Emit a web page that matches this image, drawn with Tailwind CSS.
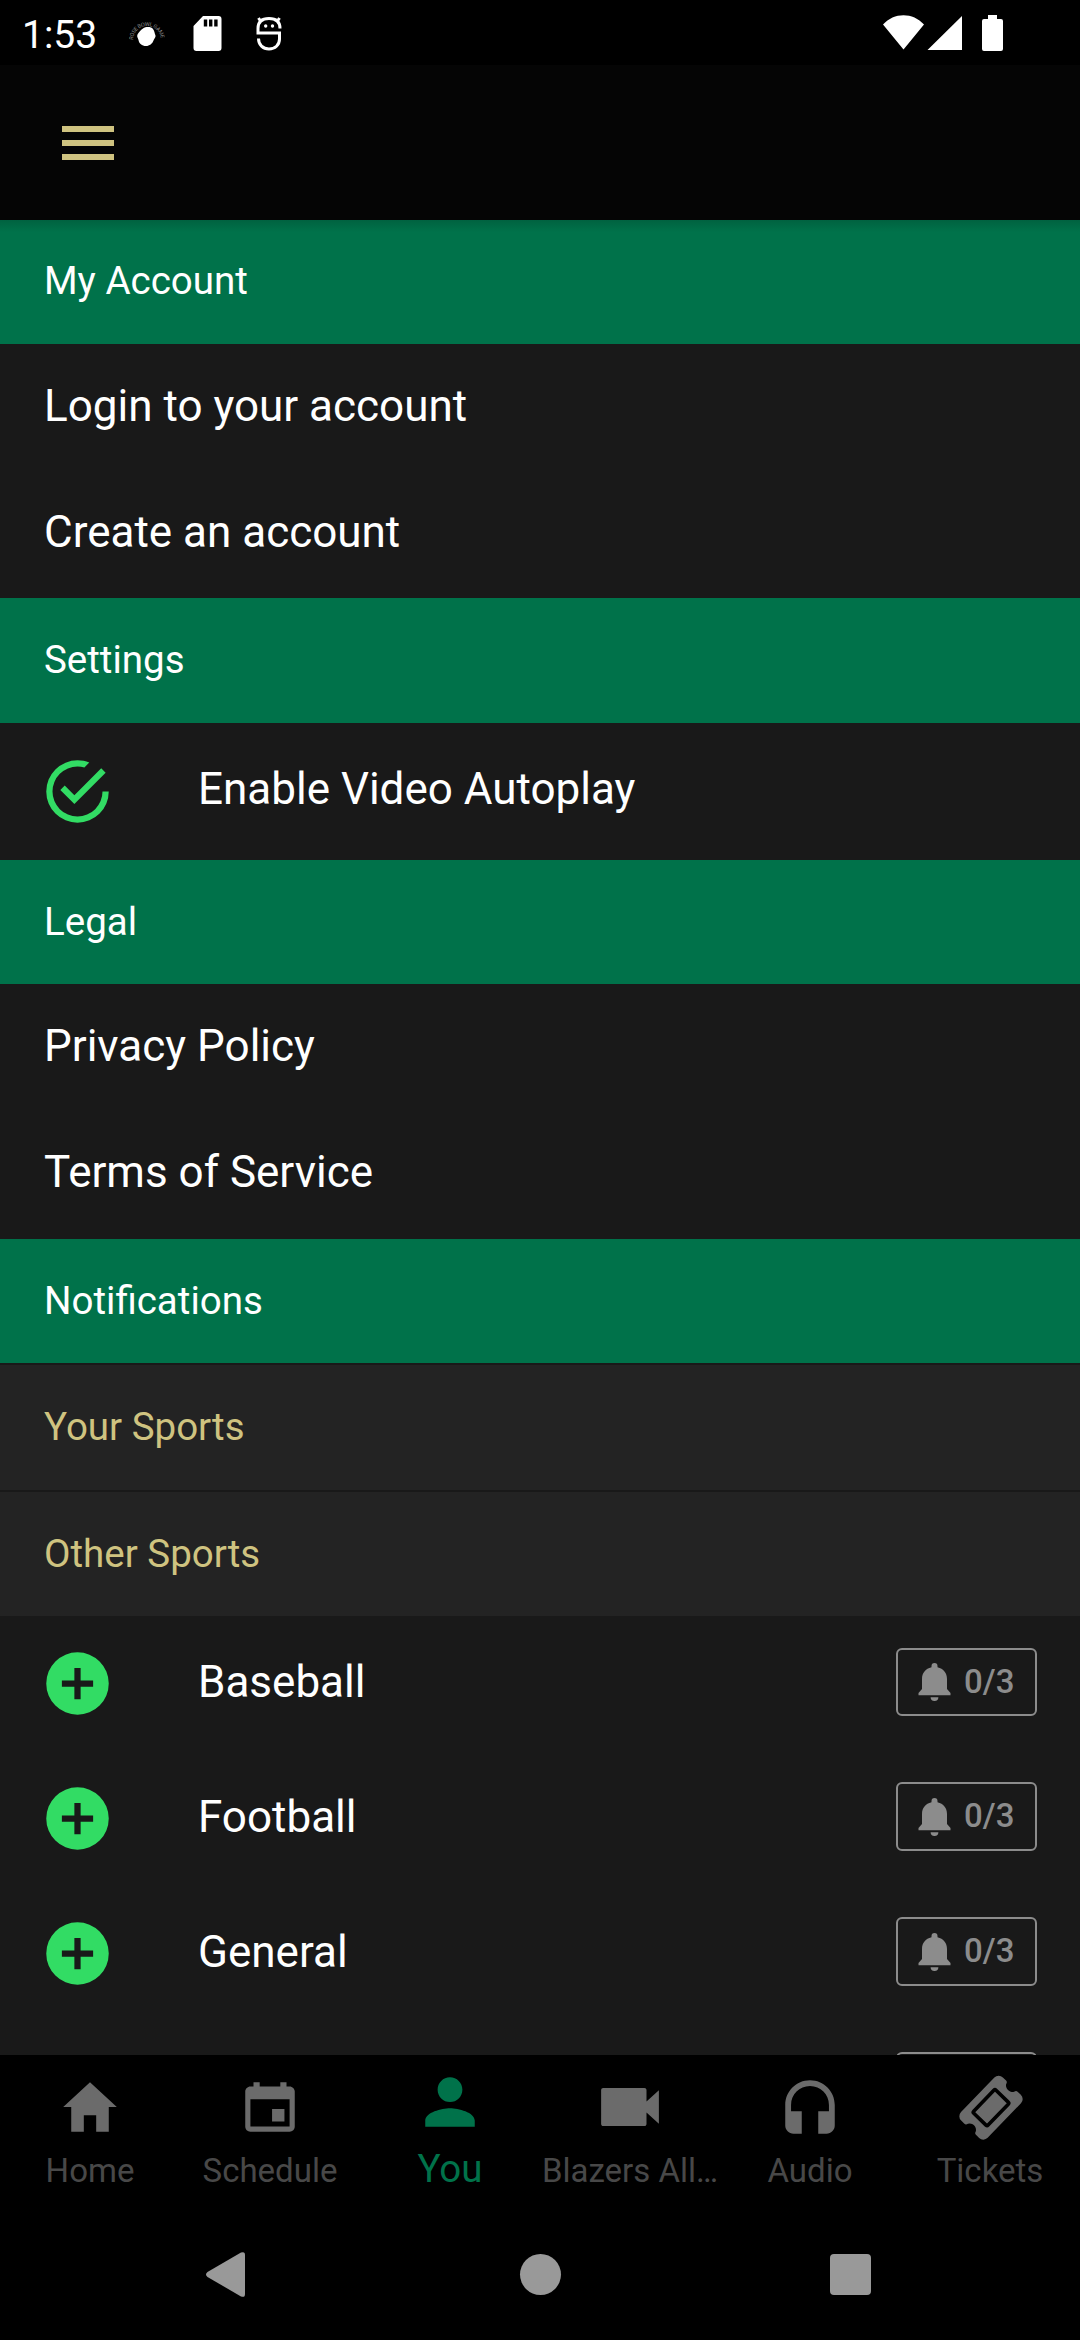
<!DOCTYPE html>
<html lang="en">
<head>
<meta charset="utf-8">
<title>Account</title>
<script src="https://cdn.jsdelivr.net/npm/@tailwindcss/browser@4"></script>
</head>
<body class="bg-black">
<svg class="hidden">
  <symbol id="plus" viewBox="0 0 24 24"><path d="M17,13H13V17H11V13H7V11H11V7H13V11H17M12,2A10,10 0 0,0 2,12A10,10 0 0,0 12,22A10,10 0 0,0 22,12A10,10 0 0,0 12,2Z"/></symbol>
  <symbol id="bell" viewBox="0 0 33 38"><path d="M16.5 0a3 3 0 0 1 3 3v1.200C25.500 5.500 29 10 29 16v10L32.500 30v2.300H.5V30L4 26V16C4 10 7.500 5.500 13.500 4.200V3a3 3 0 0 1 3-3zM12.600 34.300h7.800a3.900 3.700 0 0 1-7.800 0z"/></symbol>
</svg>
<div class="flex h-[2340px] w-[1080px] flex-col overflow-hidden bg-black font-['Roboto',sans-serif] text-white">

  <!-- Status bar -->
  <header class="flex h-[65px] shrink-0 items-start bg-black">
    <span class="ml-[22px] mt-[12px] w-[107px] text-[39px] leading-[46px]">1:53</span>
    <svg class="mt-[15px] h-9 w-[36px]" viewBox="0 0 36 36">
      <path id="arc" d="M4 25A14 14 0 0 1 32 25" fill="none"/>
      <text class="fill-[#8a8a8a] text-[5.500px]" textLength="42"><textPath href="#arc">ROSE BOWL GAME</textPath></text>
      <path fill="#fff" d="M14 13.500c3-2 8-2 10 .5 1.500 2 1.500 4 2.500 6.500.5 2-1.500 3-2 5-1 3-4 5.500-7.500 5.500-4 0-7-2.500-7.500-6-.5-2-2-3.500-1-5.500 1.500-2.500 3-4.500 5.500-6z"/>
    </svg>
    <svg class="ml-[28px] mt-[16px] h-[35px] w-[29px]" viewBox="0 0 29 35"><path fill="#fff" fill-rule="evenodd" d="M10 0h15.500a3 3 0 0 1 3 3v29a3 3 0 0 1-3 3H3.500a3 3 0 0 1-3-3V10zM10.800 3.500v7h3.400v-7zM16 3.500v7h3.400v-7zM21.200 3.500v7h3.400v-7z"/></svg>
    <svg class="ml-[34px] mt-[15px] h-[37px] w-[27px]" viewBox="0 0 27 37" fill="none" stroke="#fff" stroke-width="3">
      <path d="M24 13.500C24 6 19.500 3.500 13 3.500S2 6 2 13.500v4.500h21.500v6C23.500 30 19 34 13 34S2.500 30 2.500 23.500M4.500 6L2.500 3M21.500 6l2-3"/>
      <path fill="#fff" stroke="none" d="M8 11a1.700 1.700 0 1 0 3.400 0a1.700 1.700 0 1 0-3.400 0zM14.800 11a1.700 1.700 0 1 0 3.400 0a1.700 1.700 0 1 0-3.400 0z"/>
    </svg>
    <svg class="ml-auto mr-[77px] mt-[15px] h-9 w-[120px]" viewBox="0 0 120 36" fill="#fff">
      <path d="M0 9.500C11-3 30-3 41 9.500L20.500 34.500zM44.500 35L79 1v34zM105 0h9v4h4a2 2 0 0 1 2 2v28a2 2 0 0 1-2 2h-17a2 2 0 0 1-2-2V6a2 2 0 0 1 2-2h4z"/>
    </svg>
  </header>

  <!-- App bar -->
  <div class="flex h-[155px] shrink-0 flex-col gap-2 bg-[#050505] pl-[62px] pt-[61px]">
    <i class="h-1.5 w-[52px] bg-[#cfc380]"></i>
    <i class="h-1.5 w-[52px] bg-[#cfc380]"></i>
    <i class="h-1.5 w-[52px] bg-[#cfc380]"></i>
  </div>

  <main class="flex h-[1835px] shrink-0 flex-col overflow-hidden bg-[#191919] text-[44px]">
    <h2 class="flex h-[124px] shrink-0 items-center bg-[#00724a] bg-linear-to-b from-[#006240] to-[#00724a] to-[12px] pb-[2px] pl-11 text-[38.500px]">My Account</h2>
    <div class="flex h-[126px] shrink-0 items-center pb-[2px] pl-11">Login to your account</div>
    <div class="mb-[2px] flex h-[126px] shrink-0 items-center pb-[2px] pl-11">Create an account</div>

    <h2 class="flex h-[125px] shrink-0 items-center bg-[#00724a] pb-[1px] pl-11 text-[38.500px]">Settings</h2>
    <div class="flex h-[137px] shrink-0 items-center pl-[39.500px]">
      <svg class="mr-[82.500px] size-[75px] fill-[#32dc64]" viewBox="0 0 24 24"><path d="M20,12A8,8 0 0,1 12,20A8,8 0 0,1 4,12A8,8 0 0,1 12,4C12.76,4 13.5,4.11 14.2,4.31L15.77,2.74C14.61,2.26 13.34,2 12,2A10,10 0 0,0 2,12A10,10 0 0,0 12,22A10,10 0 0,0 22,12M7.91,10.08L6.5,11.5L11,16L21,6L19.59,4.58L11,13.17L7.91,10.08Z"/></svg>
      <span class="pb-[5px] pl-px">Enable Video Autoplay</span>
    </div>

    <h2 class="flex h-[124px] shrink-0 items-center bg-[#00724a] pl-11 text-[38.500px]">Legal</h2>
    <div class="flex h-[126px] shrink-0 items-center pb-[2px] pl-11">Privacy Policy</div>
    <div class="mb-[3px] flex h-[126px] shrink-0 items-center pb-[2px] pl-11">Terms of Service</div>

    <h2 class="flex h-[124px] shrink-0 items-center bg-[#00724a] pl-11 text-[38.500px]">Notifications</h2>
    <h3 class="mt-[2px] flex h-[125px] shrink-0 items-center bg-[#232323] pb-[1px] pl-11 text-[38.500px] text-[#cfc380]">Your Sports</h3>
    <h3 class="mt-[2px] flex h-[124px] shrink-0 items-center bg-[#232323] pl-11 text-[38.500px] text-[#cfc380]">Other Sports</h3>

    <div class="flex h-[135px] shrink-0 items-center pl-[39.500px] pr-[43px]">
      <svg class="mr-[82.500px] size-[75px] fill-[#32dc64]"><use href="#plus"/></svg>
      <span class="flex-1 pb-[3px] pl-px">Baseball</span>
      <div class="mb-[3px] flex h-[68px] w-[141px] items-center rounded-[6px] border-2 border-[#8c8c8c] pl-5 text-[33px] font-medium text-[#8c8c8c]"><svg class="mr-[13px] h-[38px] w-[33px] fill-[#8c8c8c]"><use href="#bell"/></svg><span>0/3</span></div>
    </div>
    <div class="flex h-[135px] shrink-0 items-center pl-[39.500px] pr-[43px]">
      <svg class="mr-[82.500px] size-[75px] fill-[#32dc64]"><use href="#plus"/></svg>
      <span class="flex-1 pb-[3px] pl-px">Football</span>
      <div class="mb-[4px] flex h-[69px] w-[141px] items-center rounded-[6px] border-2 border-[#8c8c8c] pl-5 text-[33px] font-medium text-[#8c8c8c]"><svg class="mr-[13px] h-[38px] w-[33px] fill-[#8c8c8c]"><use href="#bell"/></svg><span class="pb-[2px]">0/3</span></div>
    </div>
    <div class="flex h-[135px] shrink-0 items-center pl-[39.500px] pr-[43px]">
      <svg class="mr-[82.500px] size-[75px] fill-[#32dc64]"><use href="#plus"/></svg>
      <span class="flex-1 pb-[3px] pl-px">General</span>
      <div class="mb-[4px] flex h-[69px] w-[141px] items-center rounded-[6px] border-2 border-[#8c8c8c] pl-5 text-[33px] font-medium text-[#8c8c8c]"><svg class="mr-[13px] h-[38px] w-[33px] fill-[#8c8c8c]"><use href="#bell"/></svg><span class="pb-[2px]">0/3</span></div>
    </div>
    <div class="flex h-[135px] shrink-0 items-center justify-end pr-[43px]">
      <div class="mb-[4px] h-[69px] w-[141px] rounded-[6px] border-2 border-[#8c8c8c]"></div>
    </div>
  </main>

  <!-- Tab bar -->
  <nav class="grid h-[165px] shrink-0 grid-cols-6 bg-black text-[33px] leading-[40px] text-[#484848]">
    <div class="flex flex-col items-center pt-[19px]"><svg class="size-[66px] fill-[#6b6b6b]" viewBox="0 0 512 512"><path d="M208 448V320h96v128h97.600V256H464L256 64 48 256h62.400v192z"/></svg><span class="mt-[11px]">Home</span></div>
    <div class="flex flex-col items-center pt-[19px]"><svg class="size-[66px] fill-[#6b6b6b]" viewBox="0 0 512 512"><path d="M368 272h-96v96h96v-96zM336 64v32H176V64h-48v32h-24c-22 0-40 18-40 40v272c0 22 18 40 40 40h304c22 0 40-18 40-40V136c0-22-18-40-40-40h-24V64h-48zm72 344H104V196h304v212z"/></svg><span class="mt-[11px]">Schedule</span></div>
    <div class="flex flex-col items-center pt-[14px] text-[38.500px] text-[#00724a]"><svg class="size-[66px] fill-[#00724a]" viewBox="0 0 512 512"><path d="M256 256c52.800 0 96-43.200 96-96s-43.200-96-96-96-96 43.200-96 96 43.200 96 96 96zm0 48c-63.600 0-192 32.400-192 96v48h384v-48c0-63.600-128.400-96-192-96z"/></svg><span class="mt-[14px]">You</span></div>
    <div class="flex flex-col items-center pt-[19px]"><svg class="size-[66px] fill-[#6b6b6b]" viewBox="0 0 512 512"><path d="M384 213v-88c0-9-7-16-16-16H48c-9 0-16 7-16 16v262c0 9 7 16 16 16h320c9 0 16-7 16-16v-88l96 86V127z"/></svg><span class="mt-[11px] whitespace-nowrap">Blazers All…</span></div>
    <div class="flex flex-col items-center pt-[19px]"><svg class="size-[66px] fill-[#6b6b6b]" viewBox="0 0 512 512"><path d="M256 48C149 48 64 133.500 64 240v160c0 35 29 64 64 64h64V288h-83v-48c0-82 65-147 147-147s147 65 147 147v48h-83v176h64c35 0 64-29 64-64V240C448 133.500 363 48 256 48z"/></svg><span class="mt-[11px]">Audio</span></div>
    <div class="flex flex-col items-center pt-[19px]"><svg class="size-[66px]" viewBox="0 0 66 66"><g transform="translate(34 33.700) rotate(-46)"><path fill="#6b6b6b" d="M-24-18.500H24a6 6 0 0 1 6 6V-8q0 2-2.500 2.500a6.500 6.500 0 0 0 0 11Q30 6 30 8v4.500a6 6 0 0 1-6 6H-24a6 6 0 0 1-6-6V8q0-2 2.500-2.500a6.500 6.500 0 0 0 0-11Q-30-6-30-8v-4.500a6 6 0 0 1 6-6z"/><rect x="-16" y="-10" width="32" height="20" rx="1.500" fill="none" stroke="#000" stroke-width="3.600"/></g></svg><span class="mt-[11px]">Tickets</span></div>
  </nav>

  <!-- System navigation -->
  <footer class="flex h-[120px] shrink-0 items-start bg-black pl-[206px] pt-[32px]">
    <svg class="h-[45px] w-[39px]" viewBox="0 0 39 45"><path fill="#999" d="M1.500 20L35 .6q4-1.600 4 2.400v39q0 4-4 2.400L1.500 25q-3-2.500 0-5z"/></svg>
    <div class="ml-[275px] mt-[1.500px] size-[41px] rounded-full bg-[#999]"></div>
    <div class="ml-[269px] mt-[2px] size-[41px] rounded-[4px] bg-[#999]"></div>
  </footer>
</div>
</body>
</html>
